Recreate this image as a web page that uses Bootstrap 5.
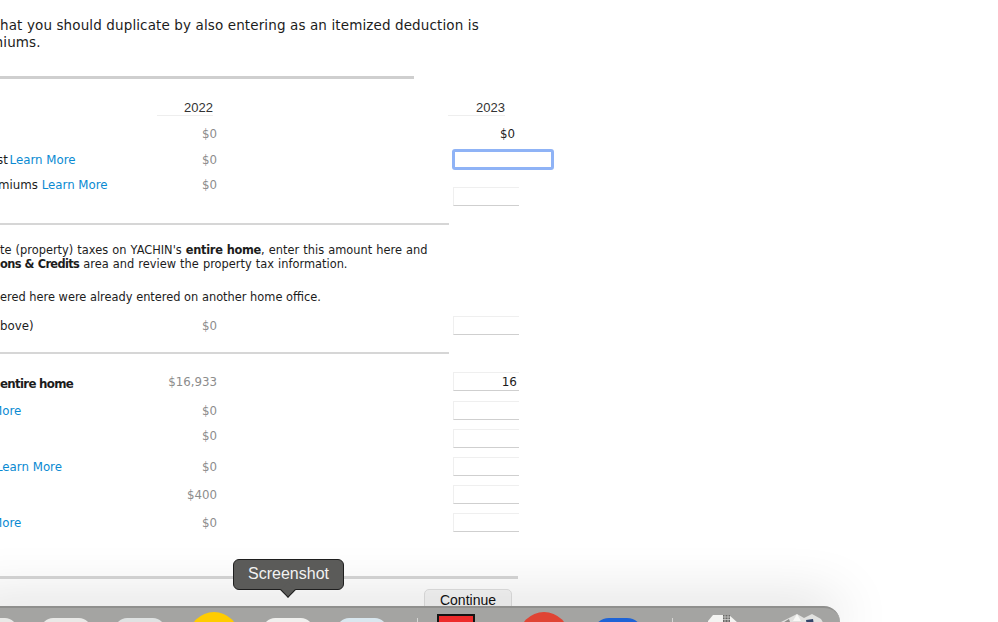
<!DOCTYPE html>
<html lang="en">
<head>
<meta charset="UTF-8">
<title>Home office</title>
<link href="https://cdn.jsdelivr.net/npm/bootstrap@5.3.3/dist/css/bootstrap.min.css" rel="stylesheet">
<style>
    html, body { height: 100%; overflow: hidden; background: #fff; }
    body { font-family: "DejaVu Sans", sans-serif; font-size: 11.8px; color: #1c1c1c; position: relative; }
    b { letter-spacing: -.3px; }

    .sheet { width: 520px; height: 622px; }
    .intro { font-size: 13.5px; letter-spacing: .12px; line-height: 17px; padding-top: 17px; margin: 0; white-space: nowrap; }
    .note { font-size: 11.4px; line-height: 14px; margin: 0; white-space: nowrap; }
    .note-wide { word-spacing: .5px; }
    .bold-tight { letter-spacing: -.65px; }
    .cut-intro { margin-left: -10px; }
    .cut-label { margin-left: -2px; }
    .cut-st { margin-left: -3px; margin-right: -2px; }
    .cut-more { margin-left: -8px; }
    .cut-learn { margin-left: -4px; }

    .rule { border: 0; margin: 0; opacity: 1; background: #d6d6d6; height: 2px; }
    .rule-top { height: 3px; width: 414px; background: #cfcfcf; }
    .rule-mid { width: 449px; }
    .rule-end { height: 3px; width: 518px; }

    .year-row { display: grid; grid-template-columns: 157px 56px 235px 57px; grid-template-rows: 17px; height: 16px; font-family: "Liberation Sans", sans-serif; font-size: 13px; color: #333; }
    .year-cell { height: 17px; text-align: right; border-bottom: 1px solid #eee; line-height: 18px; }
    .sched-row { display: grid; grid-template-columns: 165px 52px 236px 66px; grid-template-rows: 19px; height: 19px; align-items: center; white-space: nowrap; }
    .sched-row > span { padding-top: 3px; }
    .sched-row > b { padding-top: 7px; letter-spacing: -.7px; }
    .amount { text-align: right; color: #8c8c8c; }
    .lift-3 { margin-bottom: 6px; }
    .lift-23 { margin-bottom: 24px; }

    .sheet a { color: #0a8ad2; text-decoration: none; }

    .cell-input { display: block; width: 66px; height: 19px; padding: 0 2px; border: 0; border-radius: 0; font-size: 12px; line-height: 17px; color: #1c1c1c; text-align: right; background: #fff;
        border-top: 1px solid #efefef; border-left: 1px solid #efefef; border-bottom: 1px solid #cfcfcf; outline: 0; }
    .cell-focus { width: 102px; height: 21px; margin: -1px 0 0 -1px; border: 3px solid #8fb3f6; border-radius: 3px; }

    .mt-7p { margin-top: 7px; }
    .mt-9p { margin-top: 9px; }
    .mt-10p { margin-top: 10px; }
    .mt-12p { margin-top: 12px; }
    .mt-17p { margin-top: 17px; }
    .mt-18p { margin-top: 18px; }
    .mt-19p { margin-top: 19px; }
    .mt-20p { margin-top: 20px; }
    .mt-25p { margin-top: 25px; }
    .mt-44p { margin-top: 44px; }

    .continue-btn { display: block; width: 88px; height: 22px; margin-left: 424px; padding: 0; background: #f6f6f6; border: 1px solid #e0e0e0; border-radius: 5px; font-family: "Liberation Sans", sans-serif; font-size: 14px; line-height: 18px; color: #111; }

    .dock { position: absolute; left: -40px; top: 606px; width: 880px; height: 16px; background: #a4a4a2; border-top: 2px solid #8f8f8d; border-radius: 24px 24px 0 0; box-shadow: 0 0 55px rgba(0, 0, 0, .3); }
    .dock-strip { padding-left: 7px; height: 14px; overflow: hidden; }
    .dock-tile { flex: 0 0 50px; height: 50px; margin-top: 10px; margin-right: 24px; border-radius: 12px; background: #e9e9e7; }
    .tile-grey { background: #dfe2e2; }
    .tile-pale { background: #f0f0ee; }
    .tile-sky { background: #d9e7ef; margin-right: 30px; }
    .tile-yellow { margin-top: 4px; border-radius: 50%; background: #ffcc00; }
    .tile-red { margin-top: 4px; border-radius: 50%; background: #e04434; }
    .tile-blue { background: #1e63d6; border-radius: 16px; margin-right: 29px; }
    .dock-sep { flex: 0 0 1px; height: 20px; margin-top: 10px; background: #d6d6d4; }
    .sep-one { margin-right: 19px; }
    .sep-two { margin-right: 34px; }
    .dock-square { flex: 0 0 38px; height: 40px; margin-top: 6px; margin-right: 44px; background: #ee2b2b; border: 2px solid #141414; }
    .dock-doc { flex: 0 0 34px; margin-top: 5px; margin-right: 34px; }
    .dock-gem { flex: 0 0 52px; margin-top: 5px; }

    .dock-tip { position: absolute; left: 233px; top: 559px; width: 111px; height: 31px; background: #5b5b59; border: 1px solid #1e1e1e; border-radius: 6px; color: #f2f2f2; font-family: "Liberation Sans", sans-serif; font-size: 16px; line-height: 28px; text-align: center; }
    .dock-tip::after { content: ""; position: absolute; left: 48px; top: 24px; width: 12px; height: 12px; background: #5b5b59; border-right: 1px solid #1e1e1e; border-bottom: 1px solid #1e1e1e; transform: rotate(45deg) scale(.9); }
</style>
</head>
<body>
    <div class="sheet">
        <p class="intro">hat you should duplicate by also entering as an itemized deduction is<br><span class="cut-intro d-inline-block">miums.</span></p>
        <hr class="rule rule-top mt-25p">

        <div class="year-row mt-20p">
            <span></span><span class="year-cell">2022</span><span></span><span class="year-cell">2023</span>
        </div>

        <div class="sched-row mt-9p">
            <span></span><span class="amount">$0</span><span></span><span class="text-end pe-1">$0</span>
        </div>
        <div class="sched-row mt-7p">
            <span><span class="cut-st d-inline-block">st</span> <a href="#">Learn More</a></span><span class="amount">$0</span><span></span>
            <input class="form-control cell-input cell-focus" type="text">
        </div>
        <div class="sched-row mt-18p">
            <span class="lift-23"><span class="cut-label d-inline-block">miums</span> <a href="#">Learn More</a></span><span class="amount lift-23">$0</span><span></span>
            <input class="form-control cell-input" type="text">
        </div>
        <hr class="rule rule-mid mt-17p">

        <p class="note note-wide mt-18p">te (property) taxes on YACHIN's <b>entire home</b>, enter this amount here and<br><b class="bold-tight">ons &amp; Credits</b> area and review the property tax information.</p>
        <p class="note mt-19p">ered here were already entered on another home office.</p>

        <div class="sched-row mt-12p">
            <span>bove)</span><span class="amount">$0</span><span></span>
            <input class="form-control cell-input" type="text">
        </div>
        <hr class="rule rule-mid mt-17p">

        <div class="sched-row mt-18p">
            <b>entire home</b><span class="amount">$16,933</span><span></span>
            <input class="form-control cell-input" type="text" value="16">
        </div>
        <div class="sched-row mt-10p">
            <span><a href="#" class="cut-more d-inline-block">More</a></span><span class="amount">$0</span><span></span>
            <input class="form-control cell-input" type="text">
        </div>
        <div class="sched-row mt-9p">
            <span></span><span class="amount lift-3">$0</span><span></span>
            <input class="form-control cell-input" type="text">
        </div>
        <div class="sched-row mt-9p">
            <span><a href="#" class="cut-learn d-inline-block">Learn More</a></span><span class="amount">$0</span><span></span>
            <input class="form-control cell-input" type="text">
        </div>
        <div class="sched-row mt-9p">
            <span></span><span class="amount">$400</span><span></span>
            <input class="form-control cell-input" type="text">
        </div>
        <div class="sched-row mt-9p">
            <span><a href="#" class="cut-more d-inline-block">More</a></span><span class="amount">$0</span><span></span>
            <input class="form-control cell-input" type="text">
        </div>

        <hr class="rule rule-end mt-44p">
        <button type="button" class="btn continue-btn mt-10p">Continue</button>
    </div>

    <div class="dock">
        <div class="dock-strip d-flex align-items-start">
            <div class="dock-tile"></div>
            <div class="dock-tile"></div>
            <div class="dock-tile tile-grey"></div>
            <div class="dock-tile tile-yellow"></div>
            <div class="dock-tile tile-pale"></div>
            <div class="dock-tile tile-sky"></div>
            <div class="dock-sep sep-one"></div>
            <div class="dock-square"></div>
            <div class="dock-tile tile-red"></div>
            <div class="dock-tile tile-blue"></div>
            <div class="dock-sep sep-two"></div>
            <svg class="dock-doc" width="34" height="20" viewBox="0 0 34 20">
                <path d="M1 8 L6 2 H22 L31 10 V20 H1 Z" fill="#f4f4f2"/>
                <path d="M16 2 H23 V9 H16 Z" fill="#6a6a68"/>
                <path d="M16 4 H23 M16 6.5 H23 M18 2 V9 M21 2 V9" stroke="#cfcfcd" stroke-width=".8"/>
            </svg>
            <svg class="dock-gem" width="52" height="20" viewBox="0 0 52 20">
                <path d="M0 20 L4 10 L14 5 L22 1 L29 5 L37 1 L46 6 L50 13 V20 Z" fill="#e2e2e0"/>
                <path d="M6 11 L14 6 L16 12 Z" fill="#8e8e8c"/>
                <path d="M22 1 L26 8 L18 8 Z" fill="#f8f8f6"/>
                <path d="M19 9 L25 9 L26 16 L20 16 Z" fill="#3fcf8e"/>
                <path d="M21 14 L27 14 L27 20 L21 20 Z" fill="#2f8fd8"/>
                <path d="M31 7 L38 6 L39 12 L32 13 Z" fill="#34466a"/>
                <path d="M33 13 L39 12 L40 18 L34 19 Z" fill="#b5562e"/>
                <path d="M42 9 L48 13 L43 16 Z" fill="#9a9a98"/>
            </svg>
        </div>
    </div>

    <div class="dock-tip">Screenshot</div>

    <script src="https://cdn.jsdelivr.net/npm/bootstrap@5.3.3/dist/js/bootstrap.bundle.min.js"></script>
</body>
</html>
